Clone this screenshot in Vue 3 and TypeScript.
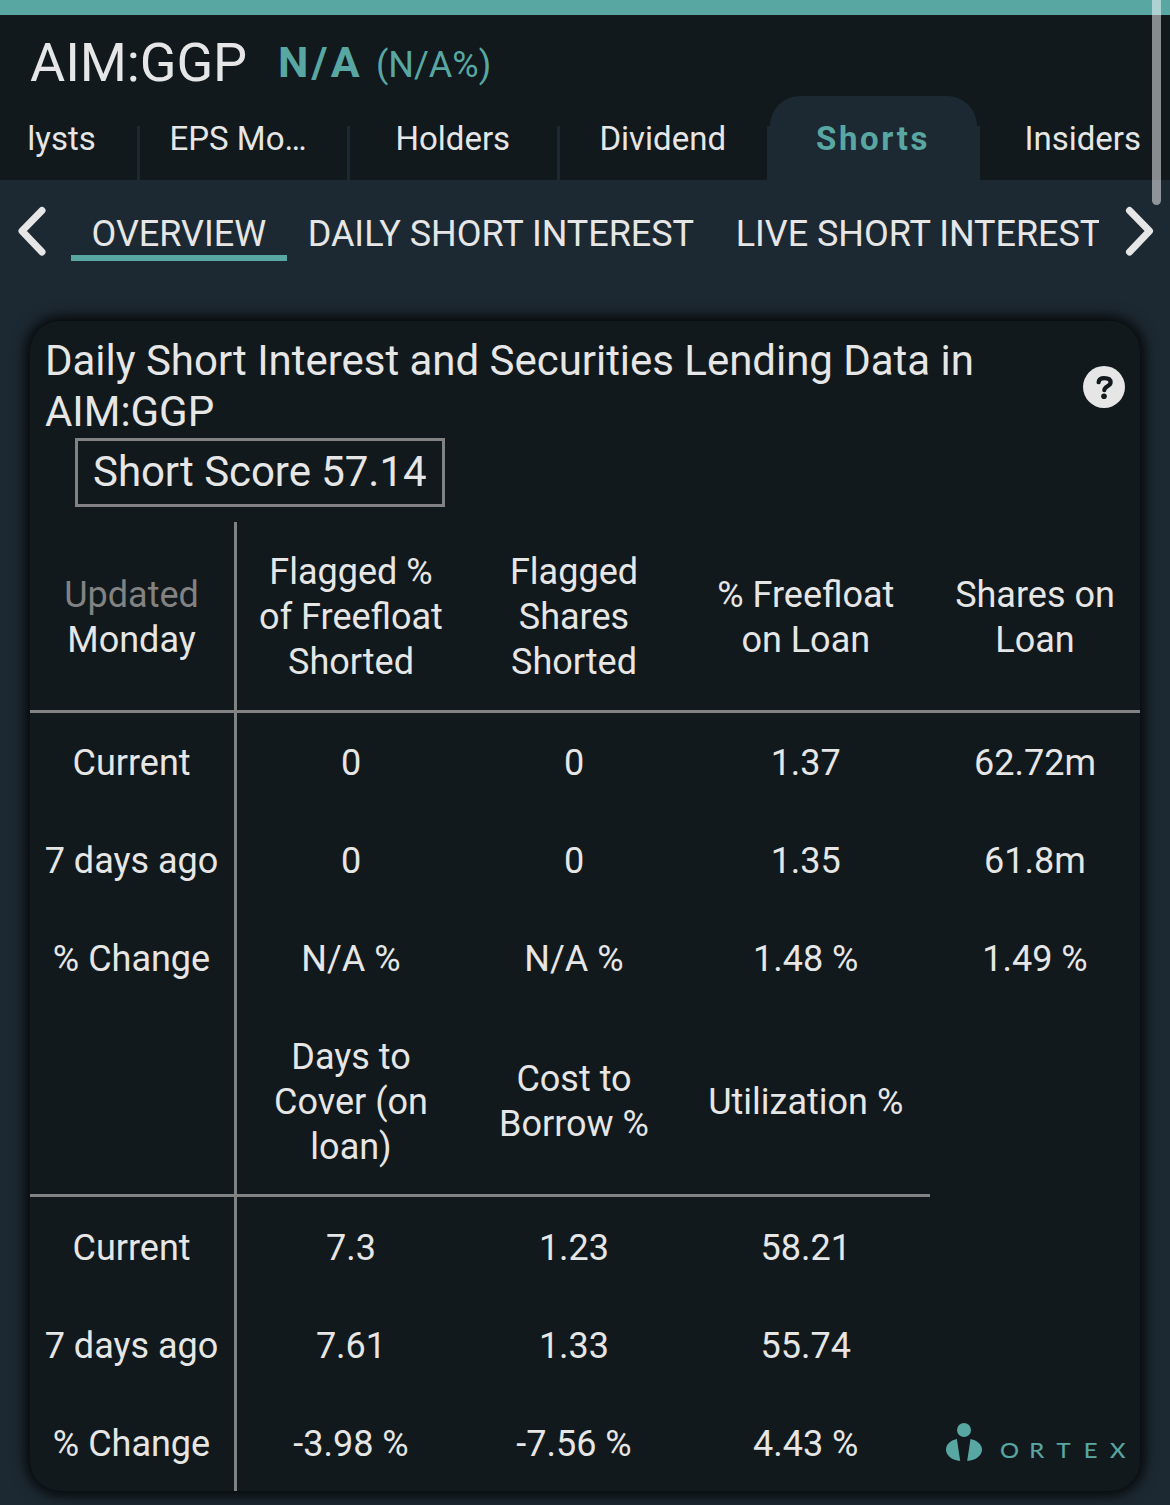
<script setup lang="ts">
interface Tab {
  label: string
  active?: boolean
}

interface Section {
  corner: string[]
  heads: string[][]
  rows: { label: string; values: string[] }[]
}

const tabs: Tab[] = [
  { label: 'Analysts' },
  { label: 'EPS Mo…' },
  { label: 'Holders' },
  { label: 'Dividend' },
  { label: 'Shorts', active: true },
  { label: 'Insiders' },
]

const views: Tab[] = [
  { label: 'OVERVIEW', active: true },
  { label: 'DAILY SHORT INTEREST' },
  { label: 'LIVE SHORT INTEREST' },
]

const sections: Section[] = [
  {
    corner: ['Updated', 'Monday'],
    heads: [
      ['Flagged %', 'of Freefloat', 'Shorted'],
      ['Flagged', 'Shares', 'Shorted'],
      ['% Freefloat', 'on Loan'],
      ['Shares on', 'Loan'],
    ],
    rows: [
      { label: 'Current', values: ['0', '0', '1.37', '62.72m'] },
      { label: '7 days ago', values: ['0', '0', '1.35', '61.8m'] },
      { label: '% Change', values: ['N/A %', 'N/A %', '1.48 %', '1.49 %'] },
    ],
  },
  {
    corner: [],
    heads: [['Days to', 'Cover (on', 'loan)'], ['Cost to', 'Borrow %'], ['Utilization %']],
    rows: [
      { label: 'Current', values: ['7.3', '1.23', '58.21'] },
      { label: '7 days ago', values: ['7.61', '1.33', '55.74'] },
      { label: '% Change', values: ['-3.98 %', '-7.56 %', '4.43 %'] },
    ],
  },
]
</script>

<template>
  <div class="page">
    <div class="status-bar"></div>
    <header class="top">
      <div class="quote">
        <span class="symbol">AIM:GGP</span>
        <span class="price">N/A</span>
        <span class="change">(N/A%)</span>
      </div>
      <nav class="tabs">
        <div class="tab-track">
          <div v-for="t in tabs" :key="t.label" class="tab" :class="{ active: t.active }">
            <span class="tab-label">{{ t.label }}</span>
          </div>
        </div>
      </nav>
    </header>

    <nav class="subnav">
      <svg class="chevron" viewBox="0 0 36 60" width="36" height="60">
        <path d="M27 9.5 L7 30 L27 51" />
      </svg>
      <div class="views">
        <div v-for="v in views" :key="v.label" class="view" :class="{ active: v.active }">{{ v.label }}</div>
      </div>
      <svg class="chevron" viewBox="0 0 36 60" width="36" height="60">
        <path d="M10.5 9.5 L30.5 30 L10.5 51" />
      </svg>
    </nav>

    <main class="card">
      <div class="card-head">
        <h1 class="title">Daily Short Interest and Securities Lending Data in AIM:GGP</h1>
        <svg class="help" viewBox="0 0 42 42" width="42" height="42">
          <circle cx="21" cy="21" r="21" fill="#e6e6e6" />
          <path d="M15.6 16.2 C16 12.8 18.2 12.2 21.2 12.2 C24.8 12.2 27.6 13.4 27.6 16.5 C27.6 20.4 21.3 20.2 21.3 24.2" fill="none" stroke="#11191c" stroke-width="4.2" stroke-linecap="round" />
          <circle cx="21" cy="30.3" r="2.8" fill="#11191c" />
        </svg>
      </div>
      <div class="score">Short Score 57.14</div>

      <div class="table">
        <section v-for="(s, i) in sections" :key="i" class="section" :class="'cols-' + s.heads.length">
          <div class="row head">
            <div class="cell first">
              <span v-for="(l, n) in s.corner" :key="l" :class="{ muted: n === 0 }">{{ l }}</span>
            </div>
            <div v-for="(h, n) in s.heads" :key="n" class="cell">
              <span v-for="l in h" :key="l">{{ l }}</span>
            </div>
          </div>
          <div v-for="r in s.rows" :key="r.label" class="row">
            <div class="cell first">{{ r.label }}</div>
            <div v-for="(v, n) in r.values" :key="n" class="cell">{{ v }}</div>
          </div>
        </section>
        <div class="brand">
          <svg viewBox="0 0 36 38" width="36" height="38">
            <g fill="#59a7a3">
              <circle cx="18" cy="7" r="7" />
              <path d="M10.9 16 C4 17.5 0 21.5 0 26.5 C0 32.5 6 37.4 14.2 38 Z" />
              <path d="M24.5 16 C31.5 17.5 36 21.5 36 26.5 C36 32.5 30 37.4 21.2 38 Z" />
            </g>
          </svg>
          <div class="wordmark"><span v-for="c in 'ORTEX'" :key="c">{{ c }}</span></div>
        </div>
      </div>
    </main>
    <div class="scroll-thumb"></div>
  </div>
</template>

<style>
body {
  background: #1d2932;
}
</style>

<style scoped>
.page {
  position: relative;
  width: 1170px;
  height: 1505px;
  overflow: hidden;
  background: #1d2932;
  color: #e6e6e6;
  font-family: Roboto, "Liberation Sans", sans-serif;
  font-size: 36px;
  line-height: 45px;
}
.status-bar {
  height: 15px;
  background: #59a7a3;
}
.top {
  height: 165px;
  background: #11191c;
}
.quote {
  display: flex;
  align-items: flex-start;
  height: 81px;
  padding-left: 30px;
  white-space: nowrap;
}
.symbol {
  width: 248px;
  font-size: 54px;
  line-height: 95px;
  letter-spacing: -0.1px;
}
.price {
  width: 98px;
  font-size: 43px;
  line-height: 95px;
  font-weight: 700;
  letter-spacing: 3.2px;
  color: #59a7a3;
}
.change {
  line-height: 101px;
  color: #59a7a3;
}
.tabs {
  height: 84px;
  margin: 0 24px 0 27px;
  overflow: hidden;
}
.tab-track {
  display: flex;
  align-items: flex-end;
  width: 1260px;
  height: 84px;
  margin-left: -97px;
}
.tab {
  display: flex;
  box-sizing: border-box;
  width: 210px;
  height: 54px;
  border-right: 3px solid #1d2932;
  padding-right: 1.5px;
  justify-content: center;
  font-size: 33px;
  line-height: 26px;
}
.tab:nth-child(2) {
  padding-right: 11px;
}
.tab.active {
  width: 213px;
  height: 84px;
  margin-left: -3px;
  border: 0;
  padding: 0 3px;
  background: linear-gradient(#1d2932, #1d2932) 0 30px / 213px 54px no-repeat;
  color: #59a7a3;
  font-weight: 700;
  letter-spacing: 2.6px;
}
.tab.active .tab-label {
  width: 207px;
  box-sizing: border-box;
  padding: 30px 1px 0 0;
  border-radius: 30px 30px 0 0;
  background: #1d2932;
  text-align: center;
}
.subnav {
  display: flex;
  align-items: center;
  height: 102px;
  padding: 0 15px;
  box-sizing: border-box;
}
.chevron {
  flex: none;
  fill: none;
  stroke: #e6e6e6;
  stroke-width: 7;
  stroke-linecap: round;
  stroke-linejoin: round;
}
.views {
  display: flex;
  flex: none;
  width: 1028px;
  height: 60px;
  margin: 0 20px;
  overflow: hidden;
  white-space: nowrap;
}
.view {
  flex: none;
  height: 54px;
  padding: 0 21px 0 20.6px;
  border-bottom: 6px solid transparent;
  line-height: 66px;
  letter-spacing: -0.03px;
}
.view.active {
  border-color: #59a7a3;
}
.card {
  width: 1110px;
  height: 1170px;
  margin: 39px 30px 0;
  border-radius: 30px;
  background: #11191c;
  box-shadow: 0 0 15px 3px #000;
}
.card-head {
  display: flex;
  justify-content: space-between;
  height: 117px;
  box-sizing: border-box;
  padding: 14px 15px 0;
}
.title {
  width: 960px;
  margin: 0;
  font-size: 42px;
  line-height: 51px;
  font-weight: 400;
  letter-spacing: -0.03px;
}
.help {
  margin-top: 31px;
}
.score {
  width: 370px;
  box-sizing: border-box;
  height: 69px;
  margin-left: 45px;
  padding: 0 15px;
  border: 3px solid #828282;
  font-size: 42px;
  line-height: 61px;
  letter-spacing: -0.05px;
  white-space: nowrap;
}
.table {
  display: flow-root;
  margin-top: 15px;
}
.row {
  display: grid;
  grid-template-columns: 207px 228px 218px 247px 210px;
  height: 98px;
}
.cols-3 .row {
  width: 900px;
  grid-template-columns: 207px 228px 218px 247px;
}
.head {
  box-sizing: border-box;
  height: 191px;
  border-bottom: 3px solid #828282;
}
.cols-3 .head {
  height: 190px;
}
.cell {
  display: flex;
  flex-direction: column;
  align-items: center;
  justify-content: center;
  padding-top: 3px;
  white-space: nowrap;
}
.cell:nth-child(4) {
  padding-right: 1.5px;
}
.cols-3 .row:not(.head) .cell {
  padding-top: 5px;
}
.first {
  border-right: 3px solid #828282;
  padding-right: 1px;
}
.muted {
  color: #828282;
}
.brand {
  display: flex;
  height: 38px;
  margin: -68px 0 0 916px;
}
.wordmark {
  display: grid;
  grid-template-columns: repeat(5, 27.2px);
  margin-left: 13.5px;
  color: #59a7a3;
  font-family: Lato, sans-serif;
  font-size: 22px;
  line-height: 53px;
  text-align: center;
  -webkit-text-stroke: 0.2px #59a7a3;
}
.wordmark span {
  transform: scaleX(1.08);
}
.scroll-thumb {
  position: absolute;
  top: -15px;
  left: 1152px;
  width: 9px;
  height: 220px;
  border-radius: 5px;
  background: rgba(255, 255, 255, 0.5);
}
</style>
